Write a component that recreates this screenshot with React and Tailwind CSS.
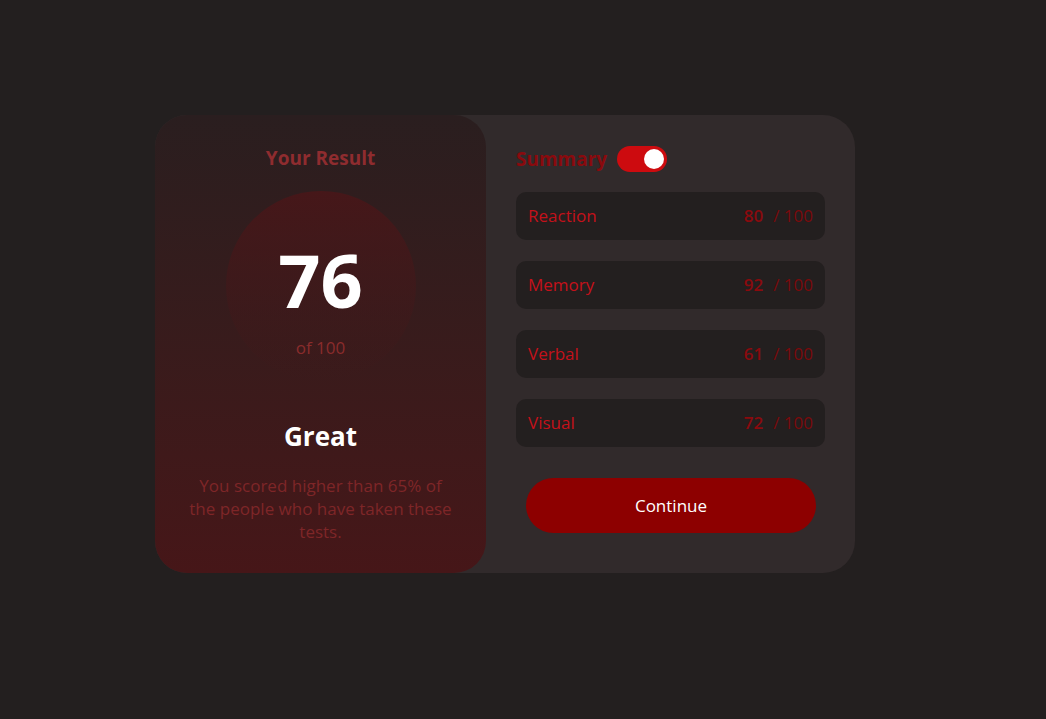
import React from 'react';

const scores = [
    { label: "Reaction", value: 80 },
    { label: "Memory", value: 92 },
    { label: "Verbal", value: 61 },
    { label: "Visual", value: 72 },
];

export default function App() {
    return (
        <main
            className="min-h-screen w-full bg-[#231f1f] flex items-center justify-center pr-[36px] pb-[31px]"
            style={{ fontFamily: '"Open Sans", "Liberation Sans", sans-serif' }}
        >
            {/* Card */}
            <div className="flex w-[700px] h-[458px] bg-[#312a2b] rounded-[32px]">
                {/* Result panel */}
                <section className="w-[331px] h-full flex flex-col items-center rounded-[32px] bg-gradient-to-b from-[#2a1e1f] to-[#461618] pt-[31px]">
                    <h2 className="text-[19px] font-bold text-[#8f2c2f] leading-6">Your Result</h2>
                    <div className="mt-[21px] w-[190px] h-[190px] rounded-full bg-gradient-to-b from-[#461719] to-[#461719]/0 flex flex-col items-center pt-[52px]">
                        <span className="text-[74px] font-bold text-white leading-none">76</span>
                        <span className="mt-[19px] text-[17px] leading-6 text-[#8a2c2c]">of 100</span>
                    </div>
                    <h3 className="mt-[39px] text-[26px] font-bold text-white leading-8">Great</h3>
                    <p className="mt-[22px] px-[30px] text-center text-[17px] leading-[23px] text-[#7e2628]">
                        You scored higher than 65% of the people who have taken these tests.
                    </p>
                </section>

                {/* Summary panel */}
                <section className="flex-1 pl-[30px] pr-[30px] pt-[31px]">
                    <div className="flex items-center gap-[10px]">
                        <h2 className="text-[19px] font-bold text-[#8a0a0e] leading-6">Summary</h2>
                        <div className="w-[50px] h-[26px] rounded-full bg-[#cd0b0f] flex items-center justify-end pr-[3px]">
                            <div className="w-[20px] h-[20px] rounded-full bg-white" />
                        </div>
                    </div>
                    <ul className="mt-[20px] flex flex-col gap-[21px]">
                        {scores.map((s) => (
                            <li key={s.label} className="h-[48px] rounded-[10px] bg-[#231f1f] flex items-center justify-between px-[12px]">
                                <span className="text-[17px] font-medium text-[#c4111a]">{s.label}</span>
                                <span className="text-[17px] text-[#7a0a0c]">
                                    <span className="font-semibold text-[#8a0a0e]">{s.value}</span>
                                    <span className="ml-[10px]">/ 100</span>
                                </span>
                            </li>
                        ))}
                    </ul>
                    <button className="mt-[31px] ml-[10px] w-[290px] h-[55px] rounded-full bg-[#8d0000] text-white text-[17px] font-medium">
                        Continue
                    </button>
                </section>
            </div>
        </main>
    );
}
